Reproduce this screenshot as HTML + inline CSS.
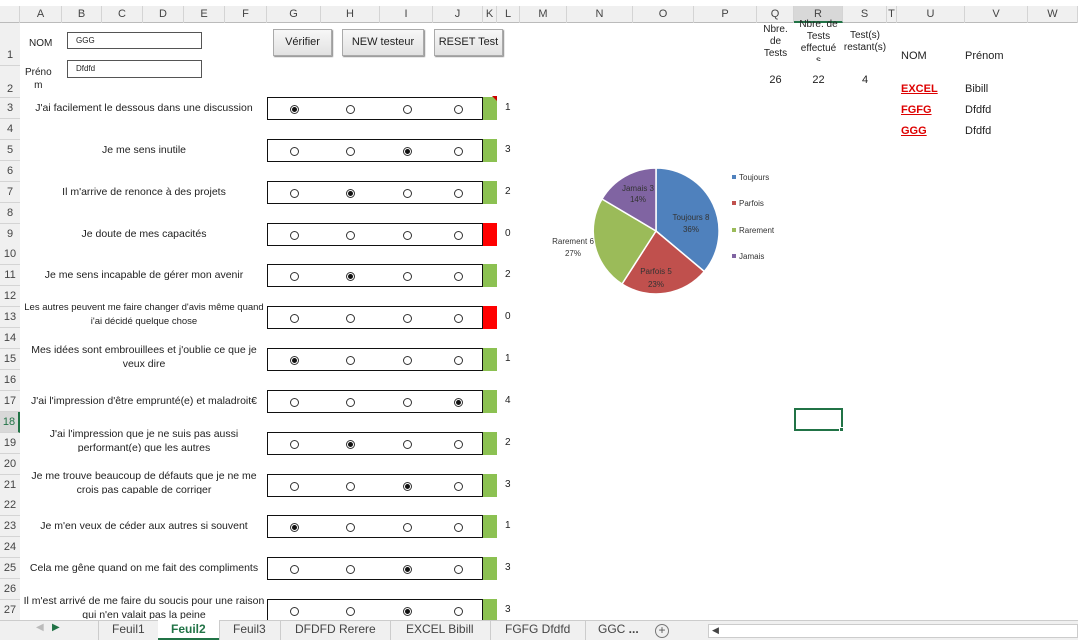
<!DOCTYPE html>
<html><head><meta charset="utf-8"><style>
*{margin:0;padding:0;box-sizing:border-box}
body{width:1078px;height:640px;overflow:hidden;background:#fff;font-family:"Liberation Sans",sans-serif;position:relative;color:#222}
.a{position:absolute}
.ch{position:absolute;top:6px;height:17px;font-size:11px;color:#444;text-align:center;line-height:17px;border-right:1px solid #d4d4d4}
.rh{position:absolute;left:0;width:20px;font-size:11px;color:#444;text-align:center;border-bottom:1px solid #d4d4d4;background:#f0f0f0}
.q{position:absolute;left:22px;width:244px;font-size:10.5px;text-align:center;line-height:14px;overflow:hidden;white-space:nowrap}
.box{position:absolute;left:267px;width:216px;height:23px;border:1px solid #111;background:#fff}
.r{position:absolute;top:7px;width:9px;height:9px;border:1px solid #333;border-radius:50%;background:#fff}
.r.s::after{content:"";position:absolute;left:1px;top:1px;width:5px;height:5px;border-radius:50%;background:#111}
.bar{position:absolute;left:483px;width:14px;height:23px;background:#8cc152}
.bar.red{background:#f00}
.n{position:absolute;left:505px;font-size:10px}
.btn{position:absolute;top:29px;height:27px;background:linear-gradient(#f7f7f7,#e2e2e2);border:1px solid #aaa;box-shadow:1px 1px 1px #888;font-size:11px;text-align:center;line-height:25px}
.tab{position:absolute;top:622px;font-size:12px;color:#444}
</style></head><body>
<div class="a" style="left:0;top:0;width:1078px;height:6px;background:#fff"></div>
<div class="a" style="left:0;top:6px;width:1078px;height:17px;background:#f0f0f0;border-bottom:1px solid #bbb"></div>
<div class="ch" style="left:0;width:20px"></div>
<div class="ch" style="left:20px;width:42px">A</div><div class="ch" style="left:62px;width:40px">B</div><div class="ch" style="left:102px;width:41px">C</div><div class="ch" style="left:143px;width:41px">D</div><div class="ch" style="left:184px;width:41px">E</div><div class="ch" style="left:225px;width:42px">F</div><div class="ch" style="left:267px;width:54px">G</div><div class="ch" style="left:321px;width:59px">H</div><div class="ch" style="left:380px;width:53px">I</div><div class="ch" style="left:433px;width:50px">J</div><div class="ch" style="left:483px;width:14px">K</div><div class="ch" style="left:497px;width:23px">L</div><div class="ch" style="left:520px;width:47px">M</div><div class="ch" style="left:567px;width:66px">N</div><div class="ch" style="left:633px;width:61px">O</div><div class="ch" style="left:694px;width:63px">P</div><div class="ch" style="left:757px;width:37px">Q</div><div class="ch" style="left:794px;width:49px;background:#d8d8d8;border-bottom:2px solid #217346">R</div><div class="ch" style="left:843px;width:44px">S</div><div class="ch" style="left:887px;width:10px">T</div><div class="ch" style="left:897px;width:68px">U</div><div class="ch" style="left:965px;width:63px">V</div><div class="ch" style="left:1028px;width:50px">W</div>
<div class="a" style="left:0;top:23px;width:20px;height:597px;background:#f0f0f0;border-right:1px solid #bbb"></div>
<div class="rh" style="top:23px;height:43px;line-height:64px">1</div>
<div class="rh" style="top:66px;height:32px;line-height:46px">2</div>
<div id="rows"></div>

<div class="a" style="left:29px;top:38px;font-size:10px">NOM</div>
<div class="a" style="left:67px;top:32px;width:135px;height:17px;border:1px solid #555;font-size:8px;padding:3px 8px">GGG</div>
<div class="a" style="left:25px;top:66px;font-size:10px;line-height:13px;text-align:center">Préno<br>m</div>
<div class="a" style="left:67px;top:60px;width:135px;height:18px;border:1px solid #555;font-size:8px;padding:3px 8px">Dfdfd</div>
<div class="btn" style="left:273px;width:59px">Vérifier</div>
<div class="btn" style="left:342px;width:82px">NEW testeur</div>
<div class="btn" style="left:434px;width:69px">RESET Test</div>

<div class="a" style="left:757px;top:24px;width:37px;font-size:10px;text-align:center;line-height:12px">Nbre.<br>de<br>Tests</div>
<div class="a" style="left:794px;top:19px;width:49px;height:42px;overflow:hidden;font-size:10px;text-align:center;line-height:12px">Nbre. de<br>Tests<br>effectué<br>s</div>
<div class="a" style="left:843px;top:30px;width:44px;font-size:10px;text-align:center;line-height:12px">Test(s)<br>restant(s)</div>
<div class="a" style="left:757px;top:74px;width:37px;font-size:11px;text-align:center">26</div>
<div class="a" style="left:794px;top:74px;width:49px;font-size:11px;text-align:center">22</div>
<div class="a" style="left:843px;top:74px;width:44px;font-size:11px;text-align:center">4</div>
<div class="a" style="left:901px;top:50px;font-size:11px">NOM</div>
<div class="a" style="left:965px;top:50px;font-size:11px">Prénom</div>
<div class="a" style="left:901px;top:83px;font-size:11px;color:#d00;text-decoration:underline;font-weight:bold">EXCEL</div>
<div class="a" style="left:965px;top:83px;font-size:11px">Bibill</div>
<div class="a" style="left:901px;top:104px;font-size:11px;color:#d00;text-decoration:underline;font-weight:bold">FGFG</div>
<div class="a" style="left:965px;top:104px;font-size:11px">Dfdfd</div>
<div class="a" style="left:901px;top:125px;font-size:11px;color:#d00;text-decoration:underline;font-weight:bold">GGG</div>
<div class="a" style="left:965px;top:125px;font-size:11px">Dfdfd</div>

<svg class="a" style="left:540px;top:160px" width="260" height="140" viewBox="540 160 260 140">
<g stroke="#fff" stroke-width="1.5">
<path d="M656 231 L656 168 A63 63 0 0 1 704.3 271.5 Z" fill="#4f81bd"/>
<path d="M656 231 L704.3 271.5 A63 63 0 0 1 622 284 Z" fill="#c0504d"/>
<path d="M656 231 L622 284 A63 63 0 0 1 602 199 Z" fill="#9bbb59"/>
<path d="M656 231 L602 199 A63 63 0 0 1 656 168 Z" fill="#8064a2"/>
</g>
<g font-family="Liberation Sans" font-size="8" fill="#333" text-anchor="middle">
<text x="638" y="191">Jamais 3</text><text x="638" y="202">14%</text>
<text x="691" y="220">Toujours 8</text><text x="691" y="232">36%</text>
<text x="573" y="244">Rarement 6</text><text x="573" y="256">27%</text>
<text x="656" y="274">Parfois 5</text><text x="656" y="287">23%</text>
</g>
<g font-family="Liberation Sans" font-size="8" fill="#333">
<rect x="732" y="175" width="4" height="4" fill="#4f81bd"/><text x="739" y="180">Toujours</text>
<rect x="732" y="201" width="4" height="4" fill="#c0504d"/><text x="739" y="206">Parfois</text>
<rect x="732" y="228" width="4" height="4" fill="#9bbb59"/><text x="739" y="233">Rarement</text>
<rect x="732" y="254" width="4" height="4" fill="#8064a2"/><text x="739" y="259">Jamais</text>
</g>
</svg>

<div class="a" style="left:794px;top:408px;width:49px;height:23px;border:2px solid #217346"></div>
<div class="a" style="left:839px;top:427px;width:5px;height:5px;background:#217346;border:1px solid #fff"></div>

<div class="a" style="left:0;top:620px;width:1078px;height:20px;background:#f0f0f0;border-top:1px solid #ccc"></div>
<div class="tab" style="left:36px;color:#bbb;font-size:10px">◀</div>
<div class="tab" style="left:52px;color:#217346;font-size:10px">▶</div>
<div class="a" style="left:98px;top:621px;width:1px;height:19px;background:#ccc"></div>
<div class="tab" style="left:112px">Feuil1</div>
<div class="a" style="left:158px;top:620px;width:61px;height:20px;background:#fff;border-bottom:2px solid #217346"></div>
<div class="tab" style="left:171px;color:#217346;font-weight:bold">Feuil2</div>
<div class="tab" style="left:233px">Feuil3</div>
<div class="a" style="left:219px;top:621px;width:1px;height:19px;background:#ccc"></div>
<div class="a" style="left:280px;top:621px;width:1px;height:19px;background:#ccc"></div>
<div class="tab" style="left:295px">DFDFD Rerere</div>
<div class="a" style="left:390px;top:621px;width:1px;height:19px;background:#ccc"></div>
<div class="tab" style="left:406px">EXCEL Bibill</div>
<div class="a" style="left:490px;top:621px;width:1px;height:19px;background:#ccc"></div>
<div class="tab" style="left:505px">FGFG Dfdfd</div>
<div class="a" style="left:585px;top:621px;width:1px;height:19px;background:#ccc"></div>
<div class="tab" style="left:598px">GGC <b>...</b></div>
<div class="a" style="left:655px;top:624px;width:14px;height:14px;border:1px solid #777;border-radius:50%;font-size:12px;line-height:11px;text-align:center;color:#555">+</div>
<div class="a" style="left:708px;top:624px;width:370px;height:14px;background:#fff;border:1px solid #ccc"></div>
<div class="tab" style="left:712px;font-size:9px;top:625px">◀</div>

<script>
var Q=[[3,"J'ai facilement le dessous dans une discussion",1],[5,"Je me sens inutile",3],[7,"Il m'arrive de renonce à des projets",2],[9,"Je doute de mes capacités",0],[11,"Je me sens incapable de gérer mon avenir",2],[13,"Les autres peuvent me faire changer d'avis même quand<br>i'ai décidé quelque chose",0],[15,"Mes idées sont embrouillees et j'oublie ce que je<br>veux dire",1],[17,"J'ai l'impression d'être emprunté(e) et maladroit€",4],[19,"J'ai l'impression que je ne suis pas aussi<br>performant(e) que les autres",2],[21,"Je me trouve beaucoup de défauts que je ne me<br>crois pas capable de corriger",3],[23,"Je m'en veux de céder aux autres si souvent",1],[25,"Cela me gêne quand on me fait des compliments",3],[27,"Il m'est arrivé de me faire du soucis pour une raison<br>qui n'en valait pas la peine",3]];
var h='';
for(var n=3;n<=27;n++){var t=98+(n-3)*20.92;h+='<div class="rh" style="top:'+t+'px;height:21px;line-height:21px;'+(n==18?'background:#d8d8d8;color:#217346;border-right:2px solid #217346':'')+'">'+n+'</div>';}
var X=[22,78,135,186];
Q.forEach(function(q){var c=108+(q[0]-3)*20.92;var two=q[1].indexOf('<br>')>0;
h+='<div class="q" style="top:'+(two?c-16:c-7)+'px;height:'+(two?25:15)+'px;'+(q[0]==13?'font-size:9.5px;':'')+'">'+q[1]+'</div>';
h+='<div class="box" style="top:'+(c-11)+'px">';for(var i=0;i<4;i++)h+='<div class="r'+(q[2]==i+1?' s':'')+'" style="left:'+X[i]+'px"></div>';h+='</div>';
h+='<div class="bar'+(q[2]==0?' red':'')+'" style="top:'+(c-11)+'px"></div>';
h+='<div class="n" style="top:'+(c-6)+'px">'+q[2]+'</div>';});
document.getElementById('rows').innerHTML=h;
</script>
<div class="a" style="left:492px;top:96px;width:0;height:0;border-left:5px solid transparent;border-top:5px solid #c00"></div>
</body></html>
